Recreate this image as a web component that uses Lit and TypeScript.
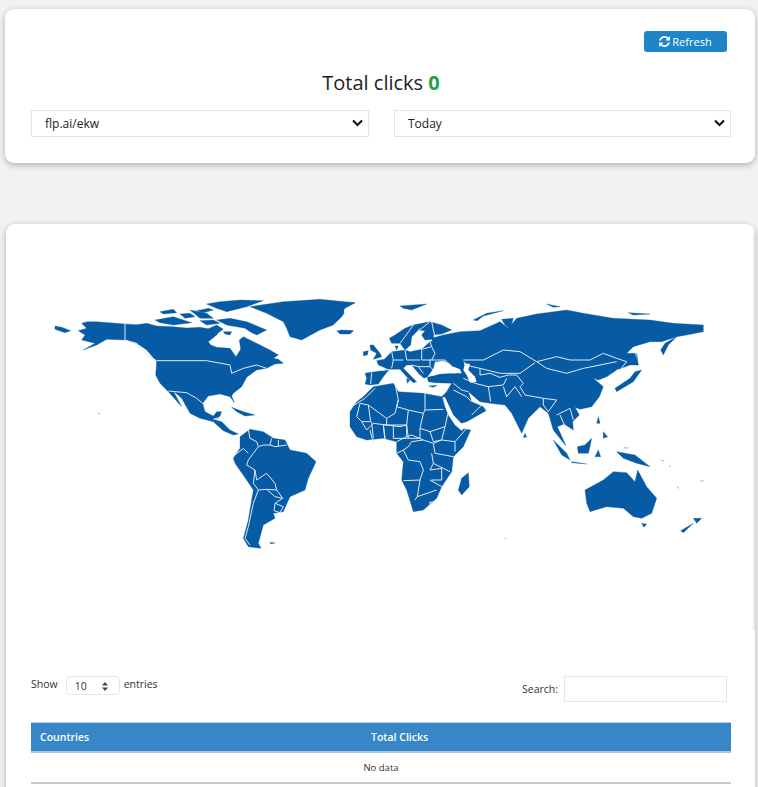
import { LitElement, html, css, svg } from 'lit';
import { customElement } from 'lit/decorators.js';

// Map shapes are traced off the reference at 3x, each list in the coordinates of its own crop.
// west: page x*3, (y-290)*3. east: (x-340)*3, (y-290)*3. mid: (x-350)*3, (y-310)*3.
const WEST_LAND = [
  '245,100 262,95 290,95 375,102 410,104 440,100 470,108 520,110 560,114 600,112 625,116 650,105 670,118 655,128 650,135 625,155 632,165 650,172 690,175 708,200 722,178 718,150 730,140 770,160 810,180 835,195 820,205 835,208 850,220 825,222 800,235 770,240 740,262 725,290 700,310 695,318 703,338 690,320 660,312 625,318 608,340 615,365 640,378 650,365 665,365 655,385 640,388 665,395 690,420 715,432 700,435 670,422 640,395 600,385 570,370 545,325 520,303 545,350 505,305 480,280 467,255 470,215 440,180 410,160 375,150 320,148 290,165 250,180 285,160 245,150 255,135 235,122 260,115',
  '165,108 185,112 212,122 195,128 165,118',
  '750,50 850,35 960,28 1065,38 1030,55 1032,70 1025,80 1000,105 960,120 905,150 870,140 860,115 850,95 800,70',
  '620,42 660,35 720,30 790,32 740,50 680,65 650,55',
  '650,90 690,85 740,95 800,120 770,135 750,125 735,115 680,105',
  '465,90 520,80 575,98 520,105 480,98',
  '480,65 520,58 530,68 490,72',
  '540,72 570,70 585,80 555,85',
  '570,60 620,70 640,85 600,85',
  '600,92 640,90 660,100 620,105',
  '590,62 625,55 640,60 610,68',
  '670,125 695,125 690,135 675,132',
  '1010,122 1060,122 1050,132 1020,132',
  '695,352 730,365 765,375 735,378 710,365',
  '650,372 662,366 660,380',
  '720,440 750,418 790,425 820,445 855,450 870,480 920,490 948,515 925,565 915,600 870,620 850,665 820,670 825,685 790,705 775,760 783,775 745,770 730,745 745,690 760,600 740,570 705,520 700,505 720,475',
  '808,758 825,758 815,762',
];

const WEST_BORDERS = [
  '375,102 375,150 410,160 440,195 470,212 620,212 690,225 695,250 730,235 770,225 800,235',
  '505,303 560,308 590,325 608,340',
  '640,388 665,380 680,400',
  '745,418 750,445 770,455 775,470 760,490 745,510 740,525 765,540',
  '860,465 825,470 810,465 790,465 775,470',
  '810,465 815,445', '835,468 835,450',
  '705,495 730,475 745,490',
  '765,540 770,570 800,550 825,580 830,600 800,598 775,600 760,580 765,540',
  '800,598 825,620 848,625 830,600',
  '775,600 760,640 745,710 735,745 750,765',
  '825,640 850,650 840,668 822,662 825,640', '848,625 825,640',
];

const EAST_LAND = [
  // Asia in one piece, Europe sits in MID_LAND and seas are cut back out on top
  '275,145 310,135 360,125 420,122 480,95 505,115 530,85 590,72 680,60 730,70 820,85 930,90 1000,100 1090,105 1090,125 1040,135 1010,140 965,155 930,155 880,170 860,190 885,190 893,225 870,225 830,240 800,260 775,270 760,265 790,290 778,320 755,350 720,358 705,352 718,375 698,395 700,420 672,402 652,410 668,445 678,468 640,420 625,370 600,350 565,385 545,430 515,370 495,345 450,340 420,335 385,305 395,335 430,350 438,362 380,395 345,405 320,350 305,320 320,305 335,280 285,278 265,275 262,262 310,250 350,250 335,225 290,200',
  '0,120 40,122 25,130 0,130',
  '0,40 45,38 15,55 0,80',
  '30,365 50,335 70,320 100,290 160,280 175,305 250,310 305,320 318,360 340,395 360,415 392,420 370,470 340,500 335,545 305,590 290,625 250,660 220,665 200,600 185,570 190,515 170,490 170,455 130,445 80,450 50,440 30,410',
  '385,548 388,590 365,615 355,600 365,565',
  '555,430 560,442 550,442',
  '640,450 680,490 690,510 665,495',
  '695,515 740,522 695,518',
  '755,445 750,470 745,490 715,490 712,470 735,465',
  '775,480 782,500 765,500',
  '775,380 780,400 770,400',
  '790,425 803,440 790,445',
  '830,485 885,495 930,530 890,520 850,505',
  '905,240 880,275 830,305 825,295 870,265 885,245',
  '890,190 895,225 888,225',
  '1010,140 985,165 970,195 962,180 975,160',
  '735,600 790,570 820,545 860,548 885,575 893,540 920,590 950,625 935,670 905,685 880,680 850,655 800,650 750,665 740,640',
  '905,700 920,703 912,712',
  '1060,685 1085,685 1070,700',
  '1060,700 1030,728 1022,722',
  '400,90 440,70 490,62 430,78 412,92',
  '485,88 520,85 510,118 495,105',
  '180,48 260,42 215,60 190,55',
  '620,42 660,50 640,52',
  '865,68 930,72 880,75',
];

const EAST_SPECKS = ['960,508 975,512 968,515', '988,525 994,532 986,530', '1010,588 1022,596 1012,594', '1080,572 1094,570 1086,576', '490,745 502,745 495,748', '850,470 870,474 855,476'];

const MID_LAND = [
  '45,190 95,182 118,178 100,200 85,222 60,225 45,222 50,205',
  '80,152 103,148 125,125 165,120 180,125 215,118 240,95 260,90 300,100 345,140 345,175 330,172 305,170 295,150 255,155 250,175 240,190 232,200 222,205 205,190 185,165 170,165 160,175 180,195 200,215 190,218 170,200 150,178 135,178 115,178 85,165',
  '118,85 135,75 165,55 190,45 215,40 240,35 275,45 305,60 275,72 250,75 252,88 225,90 215,75 225,62 205,60 185,80 182,105 165,120 150,100 125,100',
  '135,108 145,108 140,120',
  '60,105 70,105 90,130 95,140 70,148 80,130 62,120',
  '40,125 55,122 52,135 40,137',
  '170,205 180,210 172,220',
  '236,228 262,226 250,232',
];

const MID_WATER = [
  '255,170 275,160 305,168 330,178 335,190 300,190 265,192 248,198 250,185',
  '345,160 360,162 355,180 375,200 380,215 360,218 350,195 340,180',
  '278,262 285,262 310,315 345,352 335,362 315,345 295,315',
];

const EAST_BORDERS = [
  '370,210 430,210 490,180 540,185 590,215 650,200 690,210 750,210 790,190 830,205 860,215 840,240 830,240',
  '590,215 620,235 680,250 730,235 780,225 830,215',
  '372,215 375,225 420,235 480,250 540,250 585,218',
  '530,255 550,280 540,290 555,315 610,325 650,330',
  '420,235 420,255 450,250 480,262 505,255 530,255',
  '405,280 445,290 452,335', '445,290 490,285 500,265',
  '490,290 500,320 525,290 545,320',
  '610,325 610,345 625,365', '650,330 625,365',
  '650,375 690,355 700,390', '660,375 680,420',
  '340,280 365,300 385,305', '340,300 380,320 395,335',
  '370,265 405,280',
  '395,375 425,345',
];

const MID_BORDERS = [
  // Europe, north Africa and the Gulf
  '245,35 250,60 255,80', '240,35 215,55 205,60', '190,45 165,80 150,100',
  '125,125 130,150 125,175', '130,150 160,150', '165,120 170,150 210,150',
  '215,118 215,150 245,150', '245,110 255,130 245,150 285,150 305,168',
  '240,150 240,170 205,170 185,165', '205,170 220,190', '180,172 205,190', '240,170 250,180',
  '95,182 118,178', '65,188 62,222', '240,95 245,110 215,118',
  '5,290 45,265 75,235', '30,280 55,285 110,325 135,310 145,270 135,220',
  '30,280 20,320 35,335 62,335 55,285', '145,270 140,290 175,300 220,310 225,300 225,248',
  '225,300 280,298', '175,300 170,345 150,350 110,345 110,325',
  '220,310 210,355 240,365 285,350 295,305', '170,345 175,385 210,385 210,355',
  '35,335 50,360 70,340 110,345', '60,360 70,400', '100,345 105,390',
  '130,345 130,385 175,385', '285,350 275,390 315,395 350,355',
  '240,365 250,395 275,390',
];

const SOUTH_BORDERS = [
  // Africa below the equator, in the east crop's coordinates
  '170,455 200,440 215,435 250,450 280,460 305,450',
  '130,405 135,445', '200,440 200,405 165,405 130,405', '95,395 100,445',
  '190,480 205,470 215,455 250,450', '170,490 190,480 205,510 240,515 250,540',
  '280,460 285,490 340,500', '275,490 280,520 330,545', '250,540 240,570 190,572',
  '240,570 232,620 290,600', '270,570 305,590', '280,520 270,540 305,535 305,570 275,570',
  '232,620 225,630', '345,455 345,485',
  '267,638 277,635 277,642 267,642',
];

const points = (list: string[], cls: string, tag: 'polygon' | 'polyline') =>
  list.map((p) =>
    tag === 'polygon' ? svg`<polygon class=${cls} points=${p}></polygon>` : svg`<polyline class=${cls} points=${p}></polyline>`
  );

@customElement('app-root')
export class AppRoot extends LitElement {
  static styles = css`
    :host {
      display: block;
      height: 787px;
      overflow: hidden;
      background: #f1f2f4;
      font-family: 'Open Sans', sans-serif;
      color: #222;
    }
    .card {
      background: #fff;
      border-radius: 9px;
      box-shadow: 0 2px 6px rgba(0, 0, 0, 0.28);
    }
    .top {
      margin: 9px 3px 0 5px;
      height: 154px;
      box-sizing: border-box;
      padding: 22px 24px 0 26px;
    }
    .actions {
      display: flex;
      justify-content: flex-end;
      padding-right: 3px;
    }
    .refresh {
      display: flex;
      align-items: center;
      justify-content: center;
      gap: 2px;
      width: 83px;
      height: 21px;
      margin-right: 1px;
      padding: 0;
      border: 0;
      border-radius: 3px;
      background: #1e85c9;
      color: #fff;
      font: 11px 'Open Sans', sans-serif;
    }
    .refresh svg {
      width: 11px;
      height: 11px;
      fill: #fff;
    }
    h2 {
      margin: 17px 0 0;
      height: 27px;
      font-size: 20px;
      font-weight: 400;
      line-height: 27px;
      text-align: center;
      color: #222;
    }
    h2 b {
      color: #2a9d4a;
      font-weight: 700;
    }
    .filters {
      display: grid;
      grid-template-columns: 338px 337px;
      column-gap: 25px;
      margin-top: 14px;
    }
    .select {
      position: relative;
      height: 27px;
    }
    .select select {
      appearance: none;
      display: block;
      width: 100%;
      height: 100%;
      box-sizing: border-box;
      border: 1px solid #e4e4e4;
      border-radius: 0;
      background: #fff;
      padding: 0 0 0 13px;
      font: 12px 'Open Sans', sans-serif;
      color: #222;
    }
    .select svg {
      position: absolute;
      right: 6px;
      top: 9px;
      width: 11px;
      height: 8px;
      fill: none;
      stroke: #111;
      stroke-width: 2.1;
      pointer-events: none;
    }
    .bottom {
      position: relative;
      margin: 61px 3px 0 6px;
      height: 600px;
    }
    .thumb {
      position: absolute;
      right: 0;
      top: 0;
      height: 406px;
      width: 2px;
      background: #ececec;
    }
    .map {
      display: block;
      width: 749px;
      height: 452px;
    }
    .land {
      fill: #075ba5;
      stroke: #075ba5;
      stroke-width: 1;
      stroke-linejoin: round;
    }
    .speck {
      fill: #a9c6e2;
    }
    .water {
      fill: #fff;
    }
    .border {
      fill: none;
      stroke: #dfeaf5;
      stroke-width: 3;
      stroke-linejoin: round;
    }
    .tools {
      display: flex;
      justify-content: space-between;
      align-items: flex-start;
      padding: 0 28px 0 25px;
      font-size: 10.5px;
      color: #333;
    }
    .length {
      display: flex;
      align-items: flex-start;
      gap: 8px;
      line-height: 17px;
    }
    .length .size {
      display: flex;
      align-items: center;
      justify-content: space-between;
      box-sizing: border-box;
      width: 54px;
      height: 19px;
      padding: 2px 11px 0 8px;
      border: 1px solid #e6e6e6;
      border-radius: 4px;
      font-size: 10.5px;
    }
    .size svg {
      width: 6px;
      height: 9px;
      fill: #444;
    }
    .length span:last-child {
      margin-left: -4px;
    }
    .search {
      display: flex;
      align-items: center;
      gap: 6px;
    }
    .search input {
      box-sizing: border-box;
      width: 163px;
      height: 26px;
      border: 1px solid #e6e6e6;
      background: #fff;
    }
    table {
      width: 700px;
      margin: 20px 0 0 25px;
      border-collapse: collapse;
      table-layout: fixed;
      font-size: 10.5px;
    }
    th {
      height: 28px;
      padding: 0 9px;
      background: #3787c8;
      color: #fff;
      font-weight: 600;
      text-align: left;
      border-top: 1px solid #b9cfe3;
      border-bottom: 2px solid #acc6de;
    }
    th:first-child {
      width: 313px;
    }
    td {
      height: 29px;
      padding: 0;
      text-align: center;
      font-size: 9.5px;
      color: #333;
      border-bottom: 2px solid #c9c9c9;
    }
  `;

  render() {
    return html`
      <section class="card top">
        <div class="actions">
          <button class="refresh">
            <svg viewBox="0 0 1536 1536">
              <path d="M1511 928q0 5-1 7-64 268-268 434.500T764 1536q-146 0-282.500-55T238 1324l-129 129q-19 19-45 19t-45-19-19-45V960q0-26 19-45t45-19h448q26 0 45 19t19 45-19 45L420 1142q71 66 161 102t187 36q134 0 250-65t186-179q11-17 53-117 8-23 30-23h192q13 0 22.500 9.500t9.500 22.500zm25-800v448q0 26-19 45t-45 19h-448q-26 0-45-19t-19-45 19-45l138-138Q969 256 768 256q-134 0-250 65T332 500q-11 17-53 117-8 23-30 23H50q-13 0-22.500-9.500T18 608v-7q65-268 270-434.500T768 0q146 0 284 55.500T1297 212l130-129q19-19 45-19t45 19 19 45z"></path>
            </svg>
            Refresh
          </button>
        </div>
        <h2>Total clicks <b>0</b></h2>
        <div class="filters">
          ${this.renderSelect('flp.ai/ekw')} ${this.renderSelect('Today')}
        </div>
      </section>

      <section class="card bottom">
        <div class="thumb"></div>
        <svg class="map" viewBox="18 672 2247 1356">
          <g transform="translate(0 870)">
            ${points(WEST_LAND, 'land', 'polygon')} ${points(WEST_BORDERS, 'border', 'polyline')}
            <polygon class="speck" points="292,368 300,368 298,375"></polygon>
          </g>
          <g transform="translate(1020 870)">
            ${points(EAST_LAND, 'land', 'polygon')} ${points(EAST_SPECKS, 'speck', 'polygon')}
          </g>
          <g transform="translate(1050 930)">
            ${points(MID_LAND, 'land', 'polygon')} ${points(MID_WATER, 'water', 'polygon')}
          </g>
          <g transform="translate(1020 870)">
            ${points(EAST_BORDERS, 'border', 'polyline')} ${points(SOUTH_BORDERS, 'border', 'polyline')}
          </g>
          <g transform="translate(1050 930)">${points(MID_BORDERS, 'border', 'polyline')}</g>
        </svg>
        <div class="tools">
          <div class="length">
            <span>Show</span>
            <span class="size">10
              <svg viewBox="0 0 6 9"><path d="M3 0l3 3.600H0zM3 9L0 5.400h6z"></path></svg>
            </span>
            <span>entries</span>
          </div>
          <label class="search">Search: <input type="text" /></label>
        </div>
        <table>
          <thead>
            <tr><th>Countries</th><th>Total Clicks</th></tr>
          </thead>
          <tbody>
            <tr><td colspan="2">No data</td></tr>
          </tbody>
        </table>
      </section>
    `;
  }

  private renderSelect(label: string) {
    return html`
      <div class="select">
        <select><option>${label}</option></select>
        <svg viewBox="0 0 11 8"><path d="M1 1.500l4.500 4.500L10 1.500"></path></svg>
      </div>
    `;
  }
}
